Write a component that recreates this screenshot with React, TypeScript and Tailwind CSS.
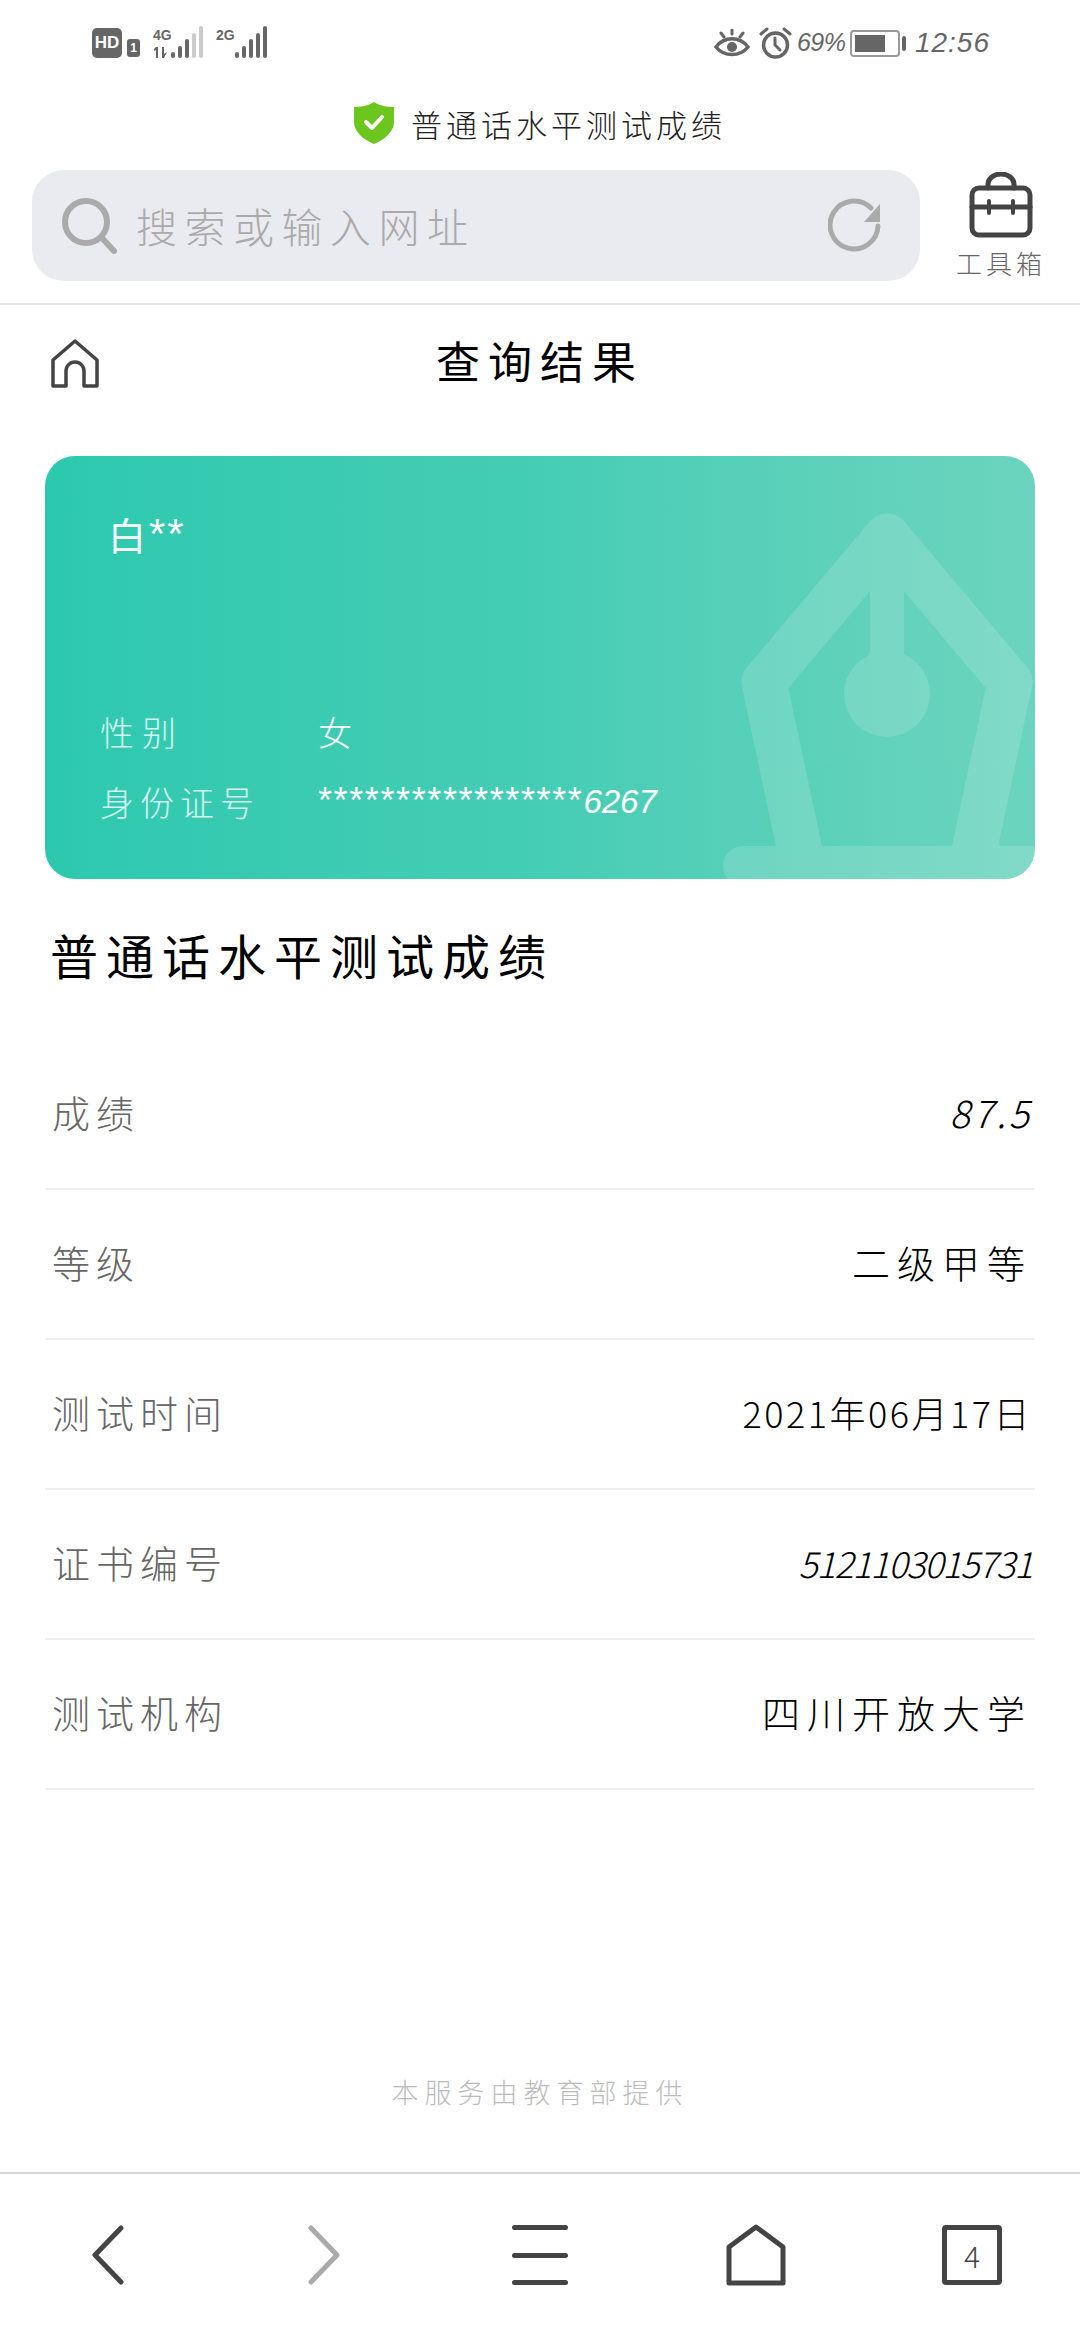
import React from 'react';

const cjk = "font-['Noto_Sans_CJK_SC',sans-serif]";

const rows = [
  { label: '成绩', value: '87.5', cls: 'italic tracking-[3px] text-[38px]' },
  { label: '等级', value: '二级甲等', cls: 'tracking-[7px] text-[38px]' },
  { label: '测试时间', value: '2021年06月17日', cls: 'tracking-[2.5px] text-[36px]' },
  { label: '证书编号', value: '5121103015731', cls: 'italic tracking-[-1.3px] text-[36px]' },
  { label: '测试机构', value: '四川开放大学', cls: 'tracking-[7px] text-[38px]' },
];

const Bars = ({ levels }: { levels: string[] }) => (
  <div className="flex items-end gap-[3px]">
    {levels.map((c, i) => (
      <div
        key={i}
        className="w-[4px] rounded-[2px]"
        style={{ height: 6 + i * 6.5, backgroundColor: c }}
      />
    ))}
  </div>
);

const StatusBar = () => (
  <div className="h-[88px] pt-[28px] pl-[92px] pr-[90px] flex justify-between items-start text-[#666]">
    <div className="flex items-start">
      <div className="w-[30px] h-[30px] rounded-[5px] bg-[#666] flex items-center justify-center text-white text-[17px] font-bold font-['Liberation_Sans',sans-serif]">
        HD
      </div>
      <div className="ml-[5px] mt-[11px] w-[13px] h-[18px] rounded-[3px] bg-[#666] flex items-center justify-center text-white text-[12px] font-bold font-['Liberation_Sans',sans-serif]">
        1
      </div>
      <div className="ml-[13px] w-[17px] flex flex-col font-['Liberation_Sans',sans-serif] font-bold">
        <span className="text-[14px] leading-[14px]">4G</span>
        <svg className="mt-[5px]" width="17" height="11" viewBox="0 0 17 11" fill="#666">
          <path d="M3 0 H5 V11 H3 V3 L1 4 V2 Z" />
          <path d="M9 0 H11 V7 L14 5 L11 11 H9 Z" />
        </svg>
      </div>
      <div className="ml-[1px] mt-[1px] h-[29px] flex items-end">
        <Bars levels={['#666', '#666', '#666', '#ccc', '#ccc']} />
      </div>
      <span className="ml-[13px] text-[14px] leading-[14px] font-bold font-['Liberation_Sans',sans-serif]">2G</span>
      <div className="mt-[1px] h-[29px] flex items-end">
        <Bars levels={['#666', '#666', '#666', '#666', '#666']} />
      </div>
    </div>
    <div className="flex items-center h-[30px]">
      <svg width="36" height="28" viewBox="0 0 36 28" fill="none" stroke="#666" strokeWidth="3.5" strokeLinecap="round">
        <path d="M2 18 C10 7 26 7 34 18 C26 28 10 28 2 18 Z" />
        <circle cx="18" cy="18" r="5" fill="#666" stroke="none" />
        <path d="M7 4 L10 8 M18 1 V5 M29 4 L26 8" strokeWidth="3" />
      </svg>
      <svg className="ml-[9px]" width="33" height="32" viewBox="0 0 33 32" fill="none" stroke="#666" strokeWidth="3.5" strokeLinecap="round">
        <circle cx="16.5" cy="18" r="12" />
        <path d="M16 11 V18 L21 23" strokeWidth="3" />
        <path d="M2 7 L8 2 M31 7 L25 2" strokeWidth="3" />
      </svg>
      <span className="ml-[5px] w-[48px] text-[25px] italic font-light font-['Liberation_Sans',sans-serif] tracking-[-0.5px]">69%</span>
      <div className="ml-[5px] w-[50px] h-[27px] rounded-[4px] border-2 border-[#999] p-[3px]">
        <div className="h-full w-[30px] bg-[#666]" />
      </div>
      <div className="ml-[2px] w-[4px] h-[15px] rounded-[2px] bg-[#666]" />
      <span className="ml-[9px] text-[28px] italic font-['Liberation_Sans',sans-serif] font-light tracking-[1px]">12:56</span>
    </div>
  </div>
);

const PageTitle = () => (
  <div className="h-[82px] pb-[12px] flex items-center justify-center gap-[17px]">
    <svg width="40" height="42" viewBox="0 0 40 42">
      <path d="M20 0 C26 4 33 5 40 5 V20 C40 30 30 38 20 42 C10 38 0 30 0 20 V5 C7 5 14 4 20 0 Z" fill="#6DC61E" />
      <path d="M12 20 L18 26 L28 15" fill="none" stroke="#fff" strokeWidth="4" strokeLinecap="round" strokeLinejoin="round" />
    </svg>
    <span className={`${cjk} text-[31px] font-light tracking-[4px] leading-none text-[#222]`}>普通话水平测试成绩</span>
  </div>
);

const SearchRow = () => (
  <div className="h-[135px] pl-[32px] flex items-start border-b-2 border-[#e8e8e8]">
    <div className="w-[888px] h-[111px] rounded-[32px] bg-[#EAEBF0] pl-[30px] pr-[38px] flex items-center">
      <svg width="56" height="56" viewBox="0 0 56 56" fill="none" stroke="#aaa" strokeWidth="6" strokeLinecap="round">
        <circle cx="24" cy="24" r="21" />
        <path d="M40 40 L52 53" />
      </svg>
      <span className={`${cjk} ml-[18px] flex-1 text-[41px] font-light tracking-[7.5px] text-[#aaa]`}>搜索或输入网址</span>
      <svg width="54" height="56" viewBox="0 0 54 56" fill="none" stroke="#aaa" strokeWidth="5" strokeLinecap="round">
        <path d="M43 10 A24 24 0 1 0 50 28" />
        <path d="M52 6 V24 H36 Z" fill="#aaa" stroke="none" />
      </svg>
    </div>
    <div className="flex-1 flex flex-col items-center pt-[2px] pl-[2px]">
      <svg width="64" height="66" viewBox="0 0 64 66" fill="none" stroke="#444" strokeWidth="5" strokeLinecap="round">
        <rect x="3" y="16" width="58" height="47" rx="7" />
        <path d="M19 16 V12 A13 10 0 0 1 45 12 V16" />
        <path d="M3 35 H61" />
        <path d="M20 29 V41 M44 29 V41" strokeWidth="4" />
      </svg>
      <span className={`${cjk} mt-[7px] text-[26px] leading-[36px] font-light tracking-[4px] text-[#666]`}>工具箱</span>
    </div>
  </div>
);

const Header = () => (
  <div className="h-[151px] relative flex items-start justify-center pt-[29px]">
    <svg className="absolute left-[51px] top-[34px]" width="48" height="50" viewBox="0 0 48 50" fill="none" stroke="#444" strokeWidth="3.5" strokeLinejoin="round">
      <path d="M24 2 L46 21 V47 H33 V32 A9 9 0 0 0 15 32 V47 H2 V21 Z" />
    </svg>
    <span className={`${cjk} text-[44px] leading-[52px] tracking-[8px] text-black`}>查询结果</span>
  </div>
);

const InfoCard = () => (
  <div className="relative h-[423px] rounded-[30px] overflow-hidden bg-gradient-to-r from-[#2CC9AF] via-[#45CDB5] via-50% to-[#6CD4BE] text-white">
    <svg className="absolute inset-0 w-full h-full" viewBox="0 0 990 423" fill="none">
      <g opacity="0.14">
        <path d="M755 395 L719 226 L842 80 L965 226 L929 395" stroke="#fff" strokeWidth="45" strokeLinejoin="round" />
        <rect x="825" y="80" width="34" height="130" fill="#fff" />
        <rect x="678" y="390" width="340" height="40" rx="20" fill="#fff" />
        <circle cx="842" cy="238" r="43" fill="#fff" />
      </g>
    </svg>
    <div className={`relative pl-[63px] pt-[52px] ${cjk}`}>
      <div className="text-[38px] leading-[52px] flex items-center">
        白<span className="ml-[3px] font-['Liberation_Sans',sans-serif] text-[42px] tracking-[2px]">**</span>
      </div>
      <div className="mt-[137px] h-[68px] flex items-center -ml-[8px]">
        <span className="w-[218px] text-[34px] font-light tracking-[8px] text-white/80">性别</span>
        <span className="text-[34px] font-light">女</span>
      </div>
      <div className="h-[72px] flex items-center -ml-[8px]">
        <span className="w-[218px] text-[34px] font-light tracking-[6px] text-white/80">身份证号</span>
        <span className="font-['Liberation_Sans',sans-serif] font-light">
          <span className="text-[36px] tracking-[1.6px]">*****************</span>
          <span className="text-[33px] italic">6267</span>
        </span>
      </div>
    </div>
  </div>
);

const ResultList = () => (
  <div>
    <div className={`${cjk} h-[161px] pt-[39px] pl-[5px] text-[48px] leading-[72px] tracking-[8px] text-black`}>
      普通话水平测试成绩
    </div>
    {rows.map((row) => (
      <div key={row.label} className="h-[150px] pb-[5px] flex items-center justify-between pl-[7px] pr-[3px] border-b-2 border-[#eeeeee]">
        <span className={`${cjk} text-[38px] font-light tracking-[6px] text-[#666]`}>{row.label}</span>
        <span className={`${cjk} ${row.cls} font-light text-black`}>{row.value}</span>
      </div>
    ))}
  </div>
);

const BottomNav = () => (
  <div className="h-[168px] border-t-2 border-[#d9d9d9] grid grid-cols-5 items-center justify-items-center pb-[4px]">
    <svg width="34" height="60" viewBox="0 0 34 60" fill="none" stroke="#444" strokeWidth="5" strokeLinecap="round" strokeLinejoin="round">
      <path d="M30 3 L4 30 L30 57" />
    </svg>
    <svg width="34" height="60" viewBox="0 0 34 60" fill="none" stroke="#aaa" strokeWidth="5" strokeLinecap="round" strokeLinejoin="round">
      <path d="M4 3 L30 30 L4 57" />
    </svg>
    <div className="w-[56px] h-[60px] flex flex-col justify-between">
      <div className="h-[5px] rounded-full bg-[#444]" />
      <div className="h-[5px] rounded-full bg-[#444]" />
      <div className="h-[5px] rounded-full bg-[#444]" />
    </div>
    <svg width="60" height="62" viewBox="0 0 60 62" fill="none" stroke="#444" strokeWidth="5" strokeLinejoin="round">
      <path d="M30 3 L57 23 V59 H3 V23 Z" />
    </svg>
    <div className={`${cjk} w-[60px] h-[60px] rounded-[4px] border-[5px] border-[#444] flex items-center justify-center text-[30px] text-[#444] font-light`}>
      4
    </div>
  </div>
);

export default function App() {
  return (
    <div className="w-[1080px] h-[2340px] bg-white flex flex-col">
      <StatusBar />
      <PageTitle />
      <SearchRow />
      <Header />
      <div className="px-[45px]">
        <InfoCard />
        <ResultList />
      </div>
      {/* footer sits near the bottom bar */}
      <div className="flex-1 flex items-end justify-center pb-[60px]">
        <span className={`${cjk} text-[27px] font-light tracking-[6px] text-[#bbb]`}>本服务由教育部提供</span>
      </div>
      <BottomNav />
    </div>
  );
}
